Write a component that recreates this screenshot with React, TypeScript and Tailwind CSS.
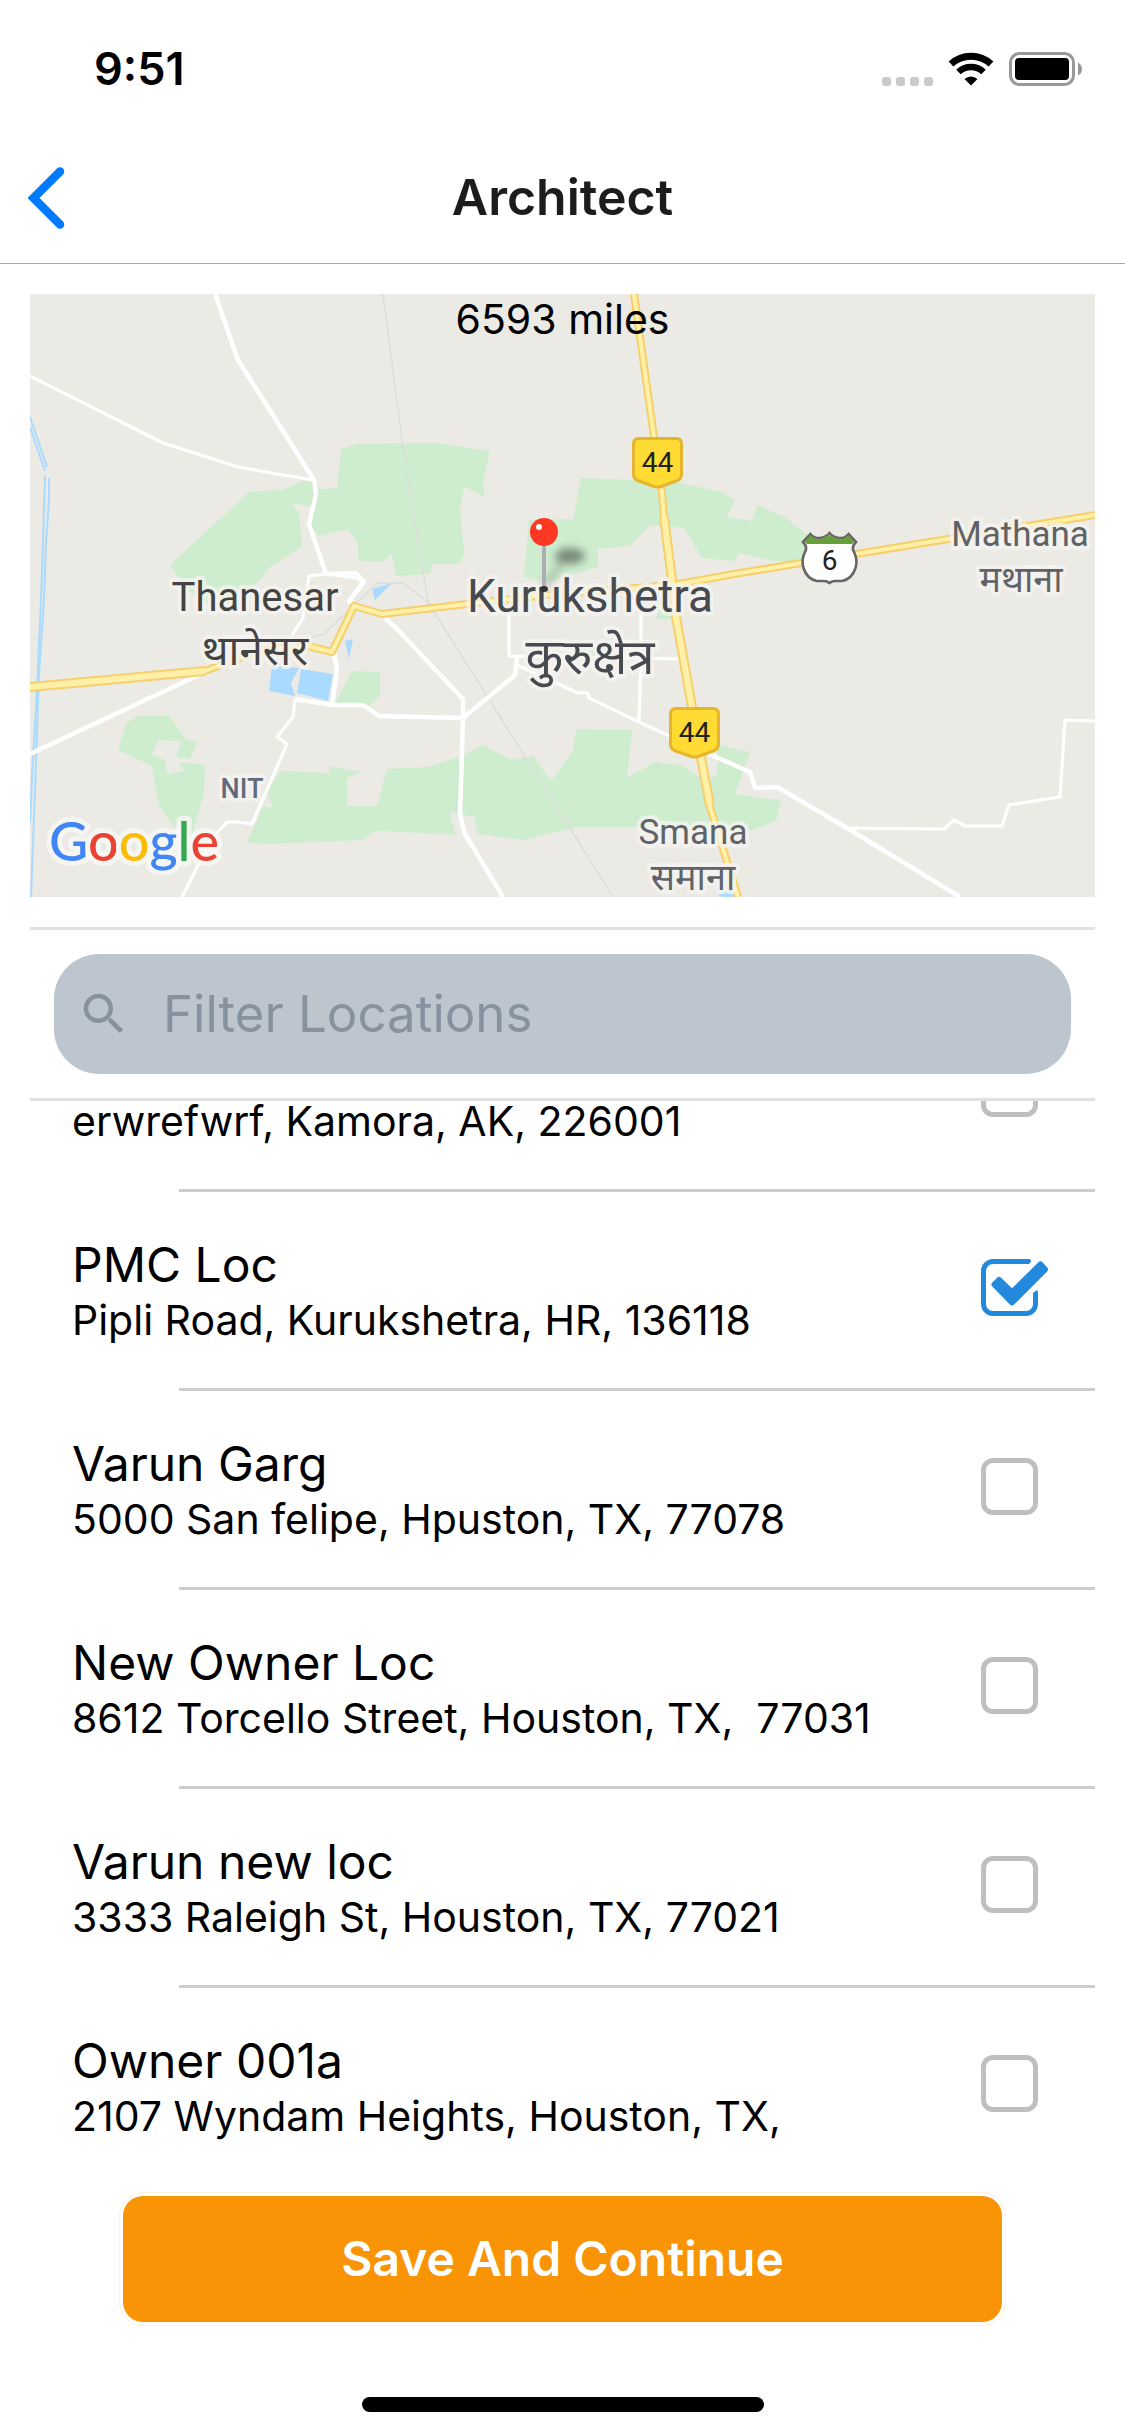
import { useState } from "react";
import { MdSearch } from "react-icons/md";

type Location = {
  id: number;
  name: string;
  address: string;
};

const locations: Location[] = [
  { id: 1, name: "", address: "erwrefwrf, Kamora, AK, 226001" },
  { id: 2, name: "PMC Loc", address: "Pipli Road, Kurukshetra, HR, 136118" },
  { id: 3, name: "Varun Garg", address: "5000 San felipe, Hpuston, TX, 77078" },
  { id: 4, name: "New Owner Loc", address: "8612 Torcello Street, Houston, TX,  77031" },
  { id: 5, name: "Varun new loc", address: "3333 Raleigh St, Houston, TX, 77021" },
  { id: 6, name: "Owner 001a", address: "2107 Wyndam Heights, Houston, TX," },
];

const parks = [
  "170,565 249,492 282,490 303,481 313,482 318,489 337,488 341,449 356,444 436,443 490,451 483,482 485,498 464,486 460,510 464,553 460,564 432,564 430,574 396,576 392,554 382,562 359,561 357,541 347,529 319,536 312,528 312,507 292,503 299,513 302,547 271,566 255,585 225,604 205,604 188,590",
  "529,520 573,519 581,478 633,480 680,483 722,492 735,500 727,517 752,521 757,505 785,517 808,535 812,562 790,562 773,561 740,553 733,561 702,558 684,528 650,525 630,546 598,549 598,567 547,582 524,577",
  "118,750 126,724 137,716 169,716 186,739 197,742 190,759 176,757 182,741 158,740 152,755 165,760 167,774 184,772 179,762 205,765 204,794 192,835 173,825 159,806 152,766",
  "280,771 329,773 329,766 360,772 347,778 347,806 377,806 387,769 427,767 462,756 483,745 512,760 533,756 551,781 573,751 576,729 632,730 627,778 655,762 680,765 707,781 717,775 717,745 750,752 735,794 760,798 781,800 776,821 747,832 637,827 577,827 523,840 477,834 475,817 449,812 456,835 380,831 375,831 363,840 267,844 247,842 263,806 273,808 267,792",
  "352,671 380,672 380,696 368,707 335,703",
  "657,600 674,600 674,619 657,619",
  "575,642 605,642 605,656 575,656",
];

const water = [
  "272,665 299,668 291,683 295,696 269,691",
  "301,669 333,674 328,701 297,693",
  "345,641 353,639 349,659",
  "372,589 392,583 375,600",
  "718,894 733,889 735,897 722,897",
];

const canals = [
  "30,417 47,467",
  "30,427 45,471",
  "45,475 43,543 41,600 37,690 32,777 30,823",
  "49,478 49,500 46,543 44,600 39,673 36,763 31,897",
];

const rails = [
  "383,294 403,447 428,602",
  "613,897 428,602 403,583 377,583 324,634 310,638",
];

const streets = [
  "30,376 163,443 238,467 277,474 314,480",
  "326,574 309,576 303,618 291,637",
  "326,574 357,578 364,584",
  "295,699 293,717 277,737 287,744 252,824 238,822 227,822 212,838 182,897",
  "509,613 509,656 682,659",
  "641,613 641,657 639,722",
  "517,665 578,693 588,693 589,698 639,722 700,750",
  "847,828 944,829 954,820 965,826 1002,826 1009,805 1060,797 1065,720 1095,721",
];

const mainStreets = [
  "215,294 238,360 314,480 316,494 309,524 326,574 356,573 364,582 349,601 356,607",
  "30,754 203,673",
  "334,652 337,670 332,705",
  "295,699 332,705 363,705 379,716 463,718",
  "385,618 397,629 463,699 463,718 460,815 465,834 503,897",
  "463,718 515,675 517,657",
  "700,750 750,772 755,788 777,787 847,828 960,897",
];

const highways = [
  "30,687 183,673 205,671 253,653 280,648 308,646 332,652 354,606 382,614 467,604 547,595 673,585 740,573 1095,515",
  "634,294 654,437 662,493 664,517 672,580 676,617 692,707 702,763 710,807 738,897",
];

const wideHighways = ["30,687 183,673 205,671", "664,517 672,580 676,617 692,707 702,763 710,805"];

function HighwayBadge({ x, y }: { x: number; y: number }) {
  return (
    <g transform={`translate(${x} ${y})`}>
      <path
        d="M7 1.5H44Q49.500 1.500 49.500 7V37Q49.500 41.500 45.500 43.500L29 49.500Q25.500 50.500 22 49.500L5.500 43.500Q1.500 41.500 1.500 37V7Q1.500 1.500 7 1.500Z"
        fill="#ffdb33"
        stroke="#e5b530"
        strokeWidth="3"
      />
      <text x="25.500" y="35" textAnchor="middle" fontSize="28" fill="#222">
        44
      </text>
    </g>
  );
}

function PlaceLabel({ x, y, size, color, children }: { x: number; y: number; size: number; color: string; children: string }) {
  return (
    <text
      x={x}
      y={y}
      textAnchor="middle"
      fontSize={size}
      fill={color}
      stroke="#f5f4f0"
      strokeOpacity="0.8"
      strokeWidth="8"
      strokeLinejoin="round"
      paintOrder="stroke"
    >
      {children}
    </text>
  );
}

function MapView() {
  return (
    <div className="relative mt-[30px] overflow-hidden bg-[#ebeae4]">
      <svg
        viewBox="30 294 1065 603"
        className="block w-full font-[Roboto,'Noto_Sans_Devanagari','Noto_Sans',sans-serif]"
        role="img"
        aria-label="Kurukshetra"
      >
        <defs>
          <filter id="pinShadow" x="-50%" y="-50%" width="200%" height="200%">
            <feGaussianBlur stdDeviation="4" />
          </filter>
        </defs>
        {parks.map((p) => (
          <polygon key={p} points={p} fill="#ceedcf" />
        ))}
        {water.map((p) => (
          <polygon key={p} points={p} fill="#aadaff" />
        ))}
        <g fill="none" stroke="#aadaff" strokeWidth="2">
          {canals.map((p) => (
            <polyline key={p} points={p} />
          ))}
        </g>
        <g fill="none" stroke="#dcdddc" strokeWidth="1.500">
          {rails.map((p) => (
            <polyline key={p} points={p} />
          ))}
        </g>
        <g fill="none" stroke="#fff" strokeLinejoin="round">
          {streets.map((p) => (
            <polyline key={p} points={p} strokeWidth="3.200" />
          ))}
          {mainStreets.map((p) => (
            <polyline key={p} points={p} strokeWidth="4.500" />
          ))}
        </g>
        <g fill="none" strokeLinejoin="round">
          {highways.map((p) => (
            <polyline key={p} points={p} stroke="#f6d06c" strokeWidth="8" />
          ))}
          {wideHighways.map((p) => (
            <polyline key={p} points={p} stroke="#f6d06c" strokeWidth="10" />
          ))}
          {highways.map((p) => (
            <polyline key={p} points={p} stroke="#fff0a8" strokeWidth="4" />
          ))}
          {wideHighways.map((p) => (
            <polyline key={p} points={p} stroke="#fff0a8" strokeWidth="6" />
          ))}
        </g>

        <HighwayBadge x={632} y={437} />
        <HighwayBadge x={669} y={707} />
        <g transform="translate(801 531)">
          <path
            d="M9.500 3Q14 8 19 7Q25 6 28.500 2Q32 6 38 7Q43 8 47.500 3L55 11Q50 16 53 21Q57 29 54.500 37Q51 48 41 50H34Q31 50 28.500 52Q26 50 23 50H16Q6 48 2.500 37Q0 29 4 21Q7 16 2 11Z"
            fill="#fff"
            stroke="#666"
            strokeWidth="2.600"
          />
          <path d="M9.500 4Q14 9 19 8Q25 7 28.500 4Q32 7 38 8Q43 9 47.500 4L53 11L51 13H6L4 11Z" fill="#689f38" />
          <text x="28.500" y="39" textAnchor="middle" fontSize="28" fill="#222">
            6
          </text>
        </g>

        <PlaceLabel x={255} y={611} size={40} color="#434343">Thanesar</PlaceLabel>
        <PlaceLabel x={255} y={665} size={42} color="#434343">थानेसर</PlaceLabel>
        <PlaceLabel x={590} y={612} size={46} color="#474b50">Kurukshetra</PlaceLabel>
        <PlaceLabel x={590} y={674} size={49} color="#474b50">कुरुक्षेत्र</PlaceLabel>
        <PlaceLabel x={1020} y={546} size={35} color="#5f6368">Mathana</PlaceLabel>
        <PlaceLabel x={1021} y={592} size={36} color="#5f6368">मथाना</PlaceLabel>
        <PlaceLabel x={693} y={844} size={35} color="#5f6368">Smana</PlaceLabel>
        <PlaceLabel x={693} y={890} size={36} color="#5f6368">समाना</PlaceLabel>
        <g className="font-medium">
          <PlaceLabel x={242} y={798} size={27} color="#5f6b7c">NIT</PlaceLabel>
        </g>

        {/* Pin */}
        <path d="M544 588L562 562" stroke="#000" strokeOpacity="0.25" strokeWidth="5" filter="url(#pinShadow)" />
        <ellipse cx="570" cy="556" rx="15" ry="8" fill="#000" fillOpacity="0.42" filter="url(#pinShadow)" />
        <rect x="542" y="544" width="4" height="44" fill="#aeadb1" />
        <ellipse cx="544" cy="589" rx="4" ry="3" fill="#333" />
        <circle cx="544" cy="532" r="14" fill="#ff3824" />
        <circle cx="539" cy="527" r="3" fill="#fff" />

        <text
          x="49"
          y="861"
          fontSize="54"
          stroke="#f7f8f4"
          strokeOpacity="0.8"
          strokeWidth="10"
          strokeLinejoin="round"
          paintOrder="stroke"
          className="font-[Lato,sans-serif] font-medium"
        >
          <tspan fill="#4285f4">G</tspan>
          <tspan fill="#ea4335">o</tspan>
          <tspan fill="#fbbc05">o</tspan>
          <tspan fill="#4285f4">g</tspan>
          <tspan fill="#34a853">l</tspan>
          <tspan fill="#ea4335">e</tspan>
        </text>
      </svg>
      <p className="absolute inset-x-0 top-0 text-center text-[41px] leading-[50px]">6593 miles</p>
    </div>
  );
}

function StatusBar() {
  return (
    <div className="flex h-[132px] items-center justify-between pt-[6px] pr-[43px] pl-[94px]">
      <span className="text-[45px] font-semibold">9:51</span>
      <div className="flex items-center gap-[15px]">
        <div className="flex gap-[5px] pt-[24px]">
          <span className="size-[9px] rounded-[3px] bg-[#cacaca]" />
          <span className="size-[9px] rounded-[3px] bg-[#cacaca]" />
          <span className="size-[9px] rounded-[3px] bg-[#cacaca]" />
          <span className="size-[9px] rounded-[3px] bg-[#cacaca]" />
        </div>
        <svg width="46" height="34" viewBox="0 0 46 34" fill="none">
          <path d="M3 12A29.500 29.500 0 0 1 43 12" stroke="#000" strokeWidth="7" />
          <path d="M10.500 20A18 18 0 0 1 35.500 20" stroke="#000" strokeWidth="6.500" />
          <path d="M16.500 27A9.500 9.500 0 0 1 29.500 27L23 33.500Z" fill="#000" />
        </svg>
        <svg width="73" height="34" viewBox="0 0 73 34">
          <rect x="1.500" y="1.500" width="63" height="31" rx="9" fill="none" stroke="#999" strokeWidth="3" />
          <rect x="6" y="6" width="54" height="22" rx="4" fill="#000" />
          <path d="M69 10.500Q73 12.500 73 17Q73 21.500 69 23.500Z" fill="#999" />
        </svg>
      </div>
    </div>
  );
}

function CheckIcon({ checked }: { checked: boolean }) {
  if (!checked) {
    return (
      <svg viewBox="0 0 67 57" className="size-full" fill="none">
        <rect x="2.500" y="2.500" width="52" height="52" rx="9.500" stroke="#bfbfbf" strokeWidth="5" />
      </svg>
    );
  }
  return (
    <svg viewBox="0 0 67 57" className="size-full overflow-visible" fill="none">
      <path
        d="M48.500 2.500H12A9.500 9.500 0 0 0 2.500 12V45A9.500 9.500 0 0 0 12 54.500H45A9.500 9.500 0 0 0 54.500 45V34"
        stroke="#2289dc"
        strokeWidth="5"
      />
      <path d="M47 0L50 1V3L47 5ZM52 35V34L56 31L57 33V35Z" fill="#2289dc" />
      <path
        d="M13.500 25.500L18 21L31 33.500L59.500 5.500L64 10.500L31 43.500Z"
        fill="#2289dc"
        stroke="#2289dc"
        strokeWidth="6"
        strokeLinejoin="round"
      />
    </svg>
  );
}

export default function App() {
  const [selected, setSelected] = useState<number[]>([2]);
  const [filter, setFilter] = useState("");

  const visible = locations.filter((l) =>
    (l.name + " " + l.address).toLowerCase().includes(filter.toLowerCase())
  );

  function toggle(id: number) {
    setSelected((prev) => (prev.includes(id) ? prev.filter((s) => s !== id) : [...prev, id]));
  }

  return (
    <div className="flex min-h-screen flex-col bg-white font-[Inter,sans-serif] text-black">
      <StatusBar />

      <header className="relative flex h-[132px] items-center justify-center border-b border-[#a7a7aa]">
        <button type="button" aria-label="Back" className="absolute left-[28px]">
          <svg width="37" height="62" viewBox="0 0 37 62" fill="none">
            <path d="M32 4.500L5.500 31L32 57.500" stroke="#007aff" strokeWidth="8.500" strokeLinecap="round" />
          </svg>
        </button>
        <h1 className="text-[50px] font-semibold text-[#1c1c1e]">Architect</h1>
      </header>

      <main className="px-[30px]">
        <MapView />

        <div className="mt-[30px] border-y-[3px] border-[#e1e1e1] p-6">
          <label className="flex h-[120px] items-center gap-[32px] rounded-[45px] bg-[#bdc6cf] pl-[23px]">
            <MdSearch className="size-[54px] shrink-0 text-[#86939e]" />
            <input
              type="text"
              aria-label="Filter Locations"
              placeholder="Filter Locations"
              value={filter}
              onChange={(e) => setFilter(e.target.value)}
              className="min-w-0 flex-1 bg-transparent text-[51px] outline-none placeholder:text-[#86939e]"
            />
          </label>
        </div>

        {/* Locations, scrolled a little past the first one */}
        <div className="overflow-hidden">
          <ul className="-mt-[108px]">
            {visible.map((loc) => (
              <li key={loc.id} className="group">
                <label className="flex h-[196px] items-center justify-between pr-[47px] pl-[42px]">
                  <span>
                    <span className="block h-[60px] text-[48px] leading-[60px]">{loc.name}</span>
                    <span className="block text-[41px] leading-[50px] whitespace-pre">{loc.address}</span>
                  </span>
                  <span className="relative mb-[6px] h-[57px] w-[67px] shrink-0">
                    <input
                      type="checkbox"
                      aria-label={loc.name || loc.address}
                      checked={selected.includes(loc.id)}
                      onChange={() => toggle(loc.id)}
                      className="absolute inset-0 size-full opacity-0"
                    />
                    <CheckIcon checked={selected.includes(loc.id)} />
                  </span>
                </label>
                <div className="ml-[149px] h-[3px] bg-[#cdcdcd] group-last:hidden" />
              </li>
            ))}
          </ul>
        </div>

        <button
          type="button"
          className="mx-auto mt-3 block h-[126px] w-[calc(100%-186px)] rounded-[20px] bg-[#f89406] text-[48px] font-semibold text-white shadow-[0_0_0_3px_#fff,0_0_0_4px_#fdf1df]"
        >
          Save And Continue
        </button>
      </main>

      <div className="mt-auto flex justify-center pt-6 pb-6">
        <div className="h-[15px] w-[402px] rounded-full bg-black" />
      </div>
    </div>
  );
}
